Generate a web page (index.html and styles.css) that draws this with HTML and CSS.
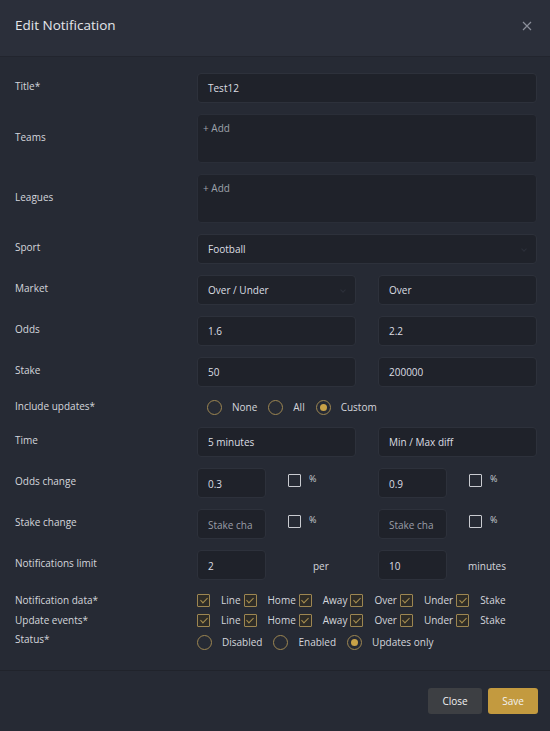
FILE: index.html
```html
<!DOCTYPE html>
<html>
<head>
<meta charset="utf-8">
<link rel="stylesheet" href="styles.css">
</head>
<body>
<div class="modal">
  <div class="header">
    <div class="title">Edit Notification</div>
    <svg class="x" width="10" height="10" viewBox="0 0 10 10"><path d="M1 1L9 9M9 1L1 9" stroke="#8b8f9a" stroke-width="1.2"/></svg>
  </div>
  <div class="body">
    <div class="form">
      <div class="row"><div class="label">Title*</div><div class="field"><div class="input">Test12</div></div></div>
      <div class="row tall"><div class="label">Teams</div><div class="field"><div class="area">+ Add</div></div></div>
      <div class="row tall"><div class="label">Leagues</div><div class="field"><div class="area">+ Add</div></div></div>
      <div class="row"><div class="label">Sport</div><div class="field"><div class="input select">Football<span class="chev"></span></div></div></div>
      <div class="row"><div class="label">Market</div><div class="field two"><div class="input select">Over / Under<span class="chev"></span></div><div class="input">Over</div></div></div>
      <div class="row"><div class="label">Odds</div><div class="field two"><div class="input">1.6</div><div class="input">2.2</div></div></div>
      <div class="row"><div class="label">Stake</div><div class="field two"><div class="input">50</div><div class="input">200000</div></div></div>
      <div class="row short"><div class="label up">Include updates*</div>
        <div class="field radios indent">
          <span class="radio"></span><span class="opt">None</span>
          <span class="radio"></span><span class="opt">All</span>
          <span class="radio on"></span><span class="opt">Custom</span>
        </div>
      </div>
      <div class="row"><div class="label">Time</div><div class="field two"><div class="input">5 minutes</div><div class="input">Min / Max diff</div></div></div>
      <div class="row"><div class="label">Odds change</div>
        <div class="field two">
          <div class="half"><div class="input small">0.3</div><span class="box"></span><span class="pct">%</span></div>
          <div class="half"><div class="input small">0.9</div><span class="box"></span><span class="pct">%</span></div>
        </div>
      </div>
      <div class="row"><div class="label">Stake change</div>
        <div class="field two">
          <div class="half"><div class="input small ph">Stake cha</div><span class="box"></span><span class="pct">%</span></div>
          <div class="half"><div class="input small ph">Stake cha</div><span class="box"></span><span class="pct">%</span></div>
        </div>
      </div>
      <div class="row"><div class="label">Notifications limit</div>
        <div class="field two">
          <div class="half"><div class="input small">2</div><span class="unit per">per</span></div>
          <div class="half"><div class="input small">10</div><span class="unit">minutes</span></div>
        </div>
      </div>
    </div>
    <div class="form compact">
      <div class="row mini"><div class="label">Notification data*</div>
        <div class="field checks">
          <span class="cb"></span><span class="opt">Line</span>
          <span class="cb"></span><span class="opt">Home</span>
          <span class="cb"></span><span class="opt">Away</span>
          <span class="cb"></span><span class="opt">Over</span>
          <span class="cb"></span><span class="opt">Under</span>
          <span class="cb"></span><span class="opt">Stake</span>
        </div>
      </div>
      <div class="row mini"><div class="label">Update events*</div>
        <div class="field checks">
          <span class="cb"></span><span class="opt">Line</span>
          <span class="cb"></span><span class="opt">Home</span>
          <span class="cb"></span><span class="opt">Away</span>
          <span class="cb"></span><span class="opt">Over</span>
          <span class="cb"></span><span class="opt">Under</span>
          <span class="cb"></span><span class="opt">Stake</span>
        </div>
      </div>
      <div class="row mini status"><div class="label">Status*</div>
        <div class="field radios">
          <span class="radio"></span><span class="opt">Disabled</span>
          <span class="radio"></span><span class="opt">Enabled</span>
          <span class="radio on"></span><span class="opt">Updates only</span>
        </div>
      </div>
    </div>
  </div>
  <div class="footer">
    <button class="btn close">Close</button>
    <button class="btn save">Save</button>
  </div>
</div>
</body>
</html>
```

FILE: styles.css
```css
* { box-sizing: border-box; }
html, body { margin: 0; padding: 0; }
body {
  background: #262a34;
  font-family: "Open Sans", "Noto Sans", sans-serif;
  color: #d9dbe0;
  width: 550px;
  height: 731px;
  overflow: hidden;
}
.modal { width: 550px; height: 731px; display: flex; flex-direction: column; background: #262a34; }
.header {
  height: 57px;
  background: #2b2f3a;
  border-bottom: 1px solid #22252e;
  display: flex;
  align-items: center;
  justify-content: space-between;
  padding: 0 18px 0 15px;
  flex-shrink: 0;
}
.title { font-size: 13.5px; color: #e4e6ea; margin-top: -6px; }
.x { margin-top: -4px; }
.body { padding: 16px 13px 20px 15px; flex: 1; display: flex; flex-direction: column; }
.form { display: flex; flex-direction: column; gap: 11px; }
.form.compact { gap: 4px; margin-top: 12px; }
.row { display: flex; align-items: center; min-height: 30px; }
.row.tall { min-height: 49px; }
.row.short { min-height: 18px; }
.row.mini { min-height: 16px; }
.row.status { margin-top: 2px; }
.label { width: 182px; flex-shrink: 0; font-size: 10px; color: #d4d6dc; margin-top: -4px; }
.row.mini .label { margin-top: 0; }
.row.status .label { margin-top: -6px; }
.label.up { margin-top: -2px; }
.field { flex: 1; display: flex; align-items: center; }
.field.two { gap: 22px; }
.field.two > * { flex: 1; }
.input {
  height: 30px;
  background: #1f222a;
  border: 1px solid #2d313b;
  border-radius: 4px;
  display: flex;
  align-items: center;
  padding: 0 10px;
  font-size: 10px;
  color: #dcdee3;
  position: relative;
  width: 100%;
}
.input.ph { color: #9a9ea8; }
.area {
  height: 49px;
  width: 100%;
  background: #1f222a;
  border: 1px solid #2a2e38;
  border-radius: 4px;
  padding: 6px 5px;
  font-size: 10px;
  color: #9ea2ab;
}
.chev {
  position: absolute;
  right: 10px;
  top: 12px;
  width: 4px;
  height: 4px;
  border-right: 1px solid #2c303a;
  border-bottom: 1px solid #2c303a;
  transform: rotate(45deg);
}
.half { display: flex; align-items: center; }
.input.small { width: 69px; flex: none; padding-top: 2px; }
.box {
  width: 13px; height: 13px;
  border: 1px solid #c9cbd0;
  border-radius: 1px;
  margin-left: 22px;
  margin-top: -6px;
}
.pct { font-size: 9px; color: #c9cbd0; margin-left: 8px; margin-top: -9px; }
.unit { font-size: 10px; color: #d4d6dc; padding-top: 2px; }
.unit.per { margin-left: 47px; }
.half .unit:not(.per) { margin-left: 21px; }
.radios { font-size: 10px; }
.indent { padding-left: 10px; }
.radio {
  width: 15px; height: 15px;
  border: 1px solid #9d8651;
  border-radius: 50%;
  display: inline-flex;
  align-items: center;
  justify-content: center;
  flex-shrink: 0;
}
.radio.on::after {
  content: "";
  width: 7px; height: 7px;
  border-radius: 50%;
  background: #c9a247;
}
.radios .opt { margin: 0 11px 0 10px; color: #d4d6dc; }
.checks { font-size: 10px; }
.cb {
  width: 13px; height: 13px;
  border: 1px solid #9d8651;
  background: #2e2c27;
  border-radius: 1px;
  position: relative;
  flex-shrink: 0;
}
.cb::after {
  content: "";
  position: absolute;
  left: 3.5px; top: 1.5px;
  width: 3px; height: 6px;
  border-right: 1.5px solid #a88f50;
  border-bottom: 1.5px solid #a88f50;
  transform: rotate(45deg);
}
.checks .opt { margin: 0 3px 0 11px; color: #d4d6dc; }
.footer {
  height: 61px;
  border-top: 1px solid #20232b;
  display: flex;
  justify-content: flex-end;
  align-items: flex-start;
  padding: 17px 12px 0 0;
  gap: 6px;
  flex-shrink: 0;
}
.btn {
  height: 26px;
  border: none;
  border-radius: 3px;
  font-family: inherit;
  font-size: 10px;
  color: #f2f2f2;
  padding: 0;
}
.btn.close { width: 54px; background: #3d3f43; }
.btn.save { width: 50px; background: #c39a3f; }
```
